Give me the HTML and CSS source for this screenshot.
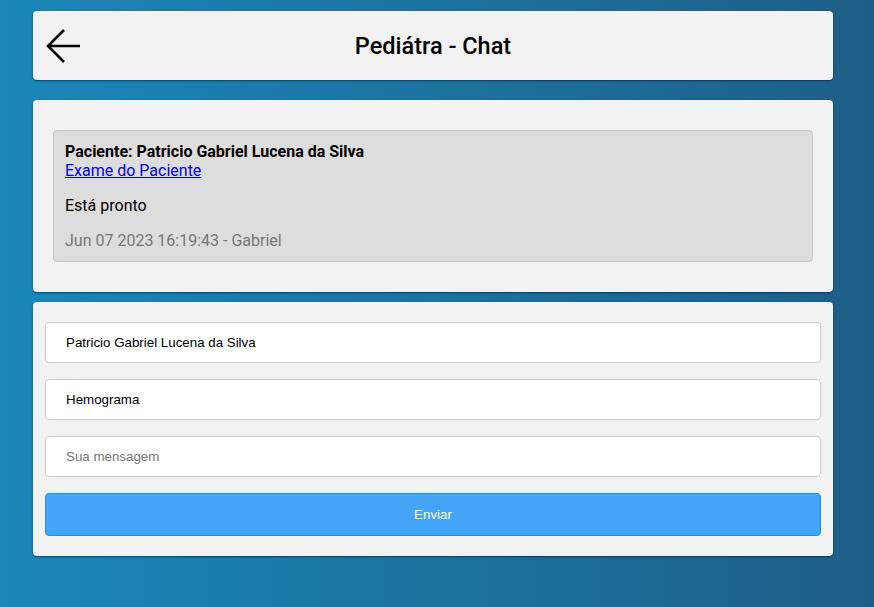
FILE: index.html
```html
<!DOCTYPE html>
<html lang="pt-BR">
<head>
    <meta charset="UTF-8">
    <meta name="viewport" content="width=device-width, initial-scale=1.0">
    <title>Pediátra - Chat</title>
    <link rel="stylesheet" href="styles.css">
</head>
<body>
    <div class="page">
        <!-- Header -->
        <div class="card header">
            <a href="#" class="back-btn" aria-label="Voltar">
                <svg width="36" height="36" viewBox="0 0 36 36">
                    <path d="M19 2 L3 18 L19 34 M3 18 H35" fill="none" stroke="#000" stroke-width="2.6"/>
                </svg>
            </a>
            <h1>Pediátra - Chat</h1>
        </div>

        <!-- Mensagens -->
        <div class="card messages">
            <div class="bubble">
                <div class="patient">Paciente: Patricio Gabriel Lucena da Silva</div>
                <a href="#" class="exam-link">Exame do Paciente</a>
                <p class="text">Está pronto</p>
                <p class="meta">Jun 07 2023 16:19:43 - Gabriel</p>
            </div>
        </div>

        <!-- Formulario -->
        <div class="card form">
            <input type="text" class="field" value="Patricio Gabriel Lucena da Silva">
            <input type="text" class="field" value="Hemograma">
            <input type="text" class="field" placeholder="Sua mensagem">
            <button class="send-btn">Enviar</button>
        </div>
    </div>
</body>
</html>
```

FILE: styles.css
```css
html, body {
    height: 100%;
}

body {
    margin: 0;
    background: linear-gradient(to right, #1a87b9, #1d5f87);
    font-family: Roboto, 'Liberation Sans', sans-serif;
}

.page {
    width: 800px;
    margin-left: 33px;
    padding-top: 11px;
}

.card {
    background-color: #f2f2f2;
    border-radius: 4px;
    box-shadow: 0 1px 2px rgba(0, 20, 60, 0.6);
}

/* Header */
.header {
    height: 69px;
    box-sizing: border-box;
    padding-top: 1px;
    display: flex;
    align-items: center;
    justify-content: center;
    position: relative;
}

.back-btn {
    position: absolute;
    left: 12px;
    top: 17px;
    display: block;
    width: 36px;
    height: 36px;
}

.back-btn svg {
    display: block;
}

.header h1 {
    margin: 0;
    font-size: 23.5px;
    font-weight: 500;
    color: #000;
}

/* Mensagens */
.messages {
    margin-top: 20px;
    padding: 30px 20px;
}

.bubble {
    background-color: #dddddd;
    border: 1px solid #c4c4c4;
    border-radius: 4px;
    padding: 11px 11px 11px;
    font-size: 16px;
    line-height: 19px;
}

.patient {
    font-weight: bold;
    color: #000;
}

.exam-link {
    color: #0000ee;
    text-decoration: underline;
}

.bubble p {
    margin: 16px 0 0;
}

.text {
    color: #000;
}

.meta {
    color: #777;
}

/* Formulario */
.form {
    margin-top: 10px;
    padding: 20px 12px;
    display: flex;
    flex-direction: column;
    gap: 16px;
}

.field {
    height: 41px;
    box-sizing: border-box;
    border: 1px solid #cccccc;
    border-radius: 4px;
    background: #fff;
    padding: 0 20px;
    font-family: 'Liberation Sans', Arial, sans-serif;
    font-size: 13.33px;
    color: #000;
}

.field::placeholder {
    color: #757575;
}

.send-btn {
    height: 43px;
    border: 1px solid #1e8ff0;
    border-radius: 4px;
    background-color: #43a4f8;
    color: #fff;
    font-family: 'Liberation Sans', Arial, sans-serif;
    font-size: 13.33px;
    cursor: pointer;
}
```
